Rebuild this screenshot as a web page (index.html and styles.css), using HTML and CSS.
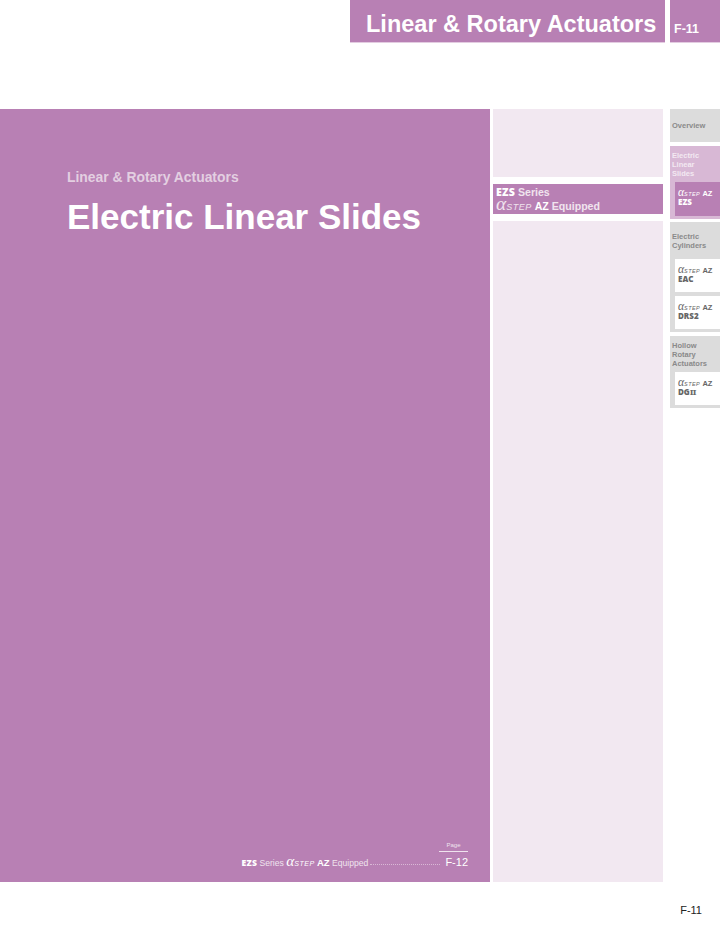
FILE: index.html
```html
<!DOCTYPE html>
<html lang="en">
<head>
<meta charset="utf-8">
<title>Electric Linear Slides</title>
<link rel="stylesheet" href="styles.css">
</head>
<body>
<header class="top">
  <div class="top-title">Linear &amp; Rotary Actuators</div>
  <div class="top-page">F-11</div>
</header>
<main class="main">
  <section class="hero">
    <div class="hero-head">
      <div class="hero-sub">Linear &amp; Rotary Actuators</div>
      <h1 class="hero-title">Electric Linear Slides</h1>
    </div>
    <div class="toc">
      <div class="toc-label"><span class="toc-label-text">Page</span></div>
      <div class="toc-row">
        <span class="toc-name"><b class="cond">EZS</b> Series <span class="as as-toc"><i class="al">α</i><i class="st">STEP</i></span> <b class="az">AZ</b> Equipped</span>
        <span class="toc-dots"></span>
        <span class="toc-page">F-12</span>
      </div>
    </div>
  </section>
  <section class="mid">
    <div class="mid-top"></div>
    <div class="mid-active">
      <div class="mid-line"><b class="cond">EZS</b> Series</div>
      <div class="mid-line"><span class="as as-mid"><i class="al">α</i><i class="st">STEP</i></span> <b>AZ</b> Equipped</div>
    </div>
    <div class="mid-rest"></div>
  </section>
  <nav class="side">
    <div class="side-group grey overview">Overview</div>
    <div class="side-group lilac">
      <div class="side-label">Electric<br>Linear<br>Slides</div>
      <div class="side-item active">
        <div><span class="as"><i class="al">α</i><i class="st">STEP</i></span> <b>AZ</b></div>
        <div class="prod">EZS</div>
      </div>
    </div>
    <div class="side-group grey cyl">
      <div class="side-label short">Electric<br>Cylinders</div>
      <div class="side-item">
        <div><span class="as"><i class="al">α</i><i class="st">STEP</i></span> <b>AZ</b></div>
        <div class="prod">EAC</div>
      </div>
      <div class="side-item">
        <div><span class="as"><i class="al">α</i><i class="st">STEP</i></span> <b>AZ</b></div>
        <div class="prod">DRS2</div>
      </div>
    </div>
    <div class="side-group grey">
      <div class="side-label">Hollow<br>Rotary<br>Actuators</div>
      <div class="side-item">
        <div><span class="as"><i class="al">α</i><i class="st">STEP</i></span> <b>AZ</b></div>
        <div class="prod">DG<span class="roman">Ⅱ</span></div>
      </div>
    </div>
  </nav>
</main>
<footer class="foot">F-11</footer>
</body>
</html>
```
FILE: styles.css
```css
* { box-sizing: border-box; }
html, body { margin: 0; padding: 0; }
body {
  width: 720px;
  height: 935px;
  overflow: hidden;
  background: #fff;
  font-family: "Liberation Sans", Arial, sans-serif;
  color: #fff;
}
.top {
  height: 109px;
  padding-left: 350px;
  display: flex;
  align-items: flex-start;
  gap: 5px;
}
.top-title {
  width: 315px;
  height: 43px;
  background: #b880b4;
  border-bottom: 1px solid #e3cce1;
  padding: 8px 0 0 16px;
  font-size: 23.5px;
  line-height: 32px;
  font-weight: 700;
  white-space: nowrap;
}
.top-page {
  width: 50px;
  height: 43px;
  background: #b880b4;
  border-bottom: 1px solid #e3cce1;
  padding: 21px 0 0 4px;
  font-size: 12.5px;
  line-height: 16px;
  font-weight: 700;
}
.main {
  display: flex;
  height: 773px;
  align-items: flex-start;
}
.hero {
  width: 490px;
  height: 773px;
  flex: none;
  background: #b880b4;
  display: flex;
  flex-direction: column;
  justify-content: space-between;
}
.hero-head { padding: 60px 0 0 67px; }
.hero-sub {
  font-size: 13.9px;
  line-height: 16px;
  font-weight: 700;
  color: #e3cfe1;
}
.hero-title {
  margin: 13px 0 0;
  font-size: 35px;
  line-height: 38px;
  font-weight: 700;
  white-space: nowrap;
}
.toc { padding: 0 22px 11px 0; }
.toc-label { display: flex; justify-content: flex-end; }
.toc-label-text {
  width: 29px;
  border-bottom: 1px solid #efe3ee;
  text-align: center;
  font-size: 6px;
  line-height: 8px;
  padding-bottom: 2px;
  color: #efe3ee;
}
.toc-row {
  display: flex;
  justify-content: flex-end;
  align-items: baseline;
  margin-top: 3px;
  font-size: 8.6px;
  line-height: 14px;
  color: #efe3ee;
}
.toc-name { white-space: nowrap; }
.toc-dots {
  width: 70px;
  margin: 2px 5px 0 2px;
  border-bottom: 1px dotted #d9b8d6;
  height: 1px;
  align-self: center;
}
.toc-page { font-size: 11px; color: #fff; }
.az { font-size: 9.5px; color: #fff; }
.cond { font-family: "Open Sans", sans-serif; font-weight: 800; letter-spacing: 0.2px; color: #fff; }
.as { white-space: nowrap; font-weight: 400; color: inherit; }
.al { font-family: "Liberation Serif", serif; font-size: 1.55em; font-style: italic; line-height: 0; }
.st { font-family: "Liberation Sans", sans-serif; font-size: 0.72em; font-style: italic; letter-spacing: 0.5px; }
.as-mid { font-size: 12.5px; }
.as-toc { font-size: 9.8px; color: #fff; }
.mid {
  width: 170px;
  flex: none;
  margin-left: 3px;
  height: 773px;
  display: flex;
  flex-direction: column;
  gap: 7px;
}
.mid-top { height: 68px; background: #f2e8f1; }
.mid-active {
  height: 30px;
  background: #b880b4;
  padding: 1px 0 0 3px;
  font-size: 10.6px;
  line-height: 14px;
  font-weight: 700;
  color: #f0e4ee;
}
.mid-line { white-space: nowrap; }
.mid-line b { color: #fff; }
.mid-rest { flex: 1; background: #f2e8f1; }
.side {
  width: 50px;
  flex: none;
  margin-left: 7px;
  display: flex;
  flex-direction: column;
  gap: 3px;
  font-size: 7.5px;
  font-weight: 700;
  line-height: 9px;
}
.side-group { padding-bottom: 3px; }
.grey { background: #dcdcdc; color: #8a8a8a; }
.overview { height: 33px; margin-bottom: 1px; padding: 12px 0 0 2px; }
.lilac { background: #d8b8d5; color: #f3e9f2; }
.cyl { margin-bottom: 1px; }
.side-label { padding: 5px 0 0 2px; height: 36px; }
.side-label.short { height: 37px; padding-top: 10px; }
.side-item {
  margin-left: 5px;
  height: 33px;
  padding: 8px 0 0 3px;
  background: #fff;
  color: #666;
  font-size: 7.5px;
  line-height: 8px;
  white-space: nowrap;
}
.side-item + .side-item { margin-top: 4px; }
.side-item.active { background: #b880b4; color: #fff; height: 34px; }
.side-item .as { font-size: 7.6px; letter-spacing: -0.2px; }
.prod { font-family: "Open Sans", sans-serif; font-weight: 800; font-size: 8px; line-height: 8px; }
.roman { font-family: "DejaVu Serif", serif; font-weight: 700; font-size: 8px; }
.foot {
  display: flex;
  justify-content: flex-end;
  padding: 21px 18px 0 0;
  font-size: 11px;
  line-height: 14px;
  color: #222;
}
```
